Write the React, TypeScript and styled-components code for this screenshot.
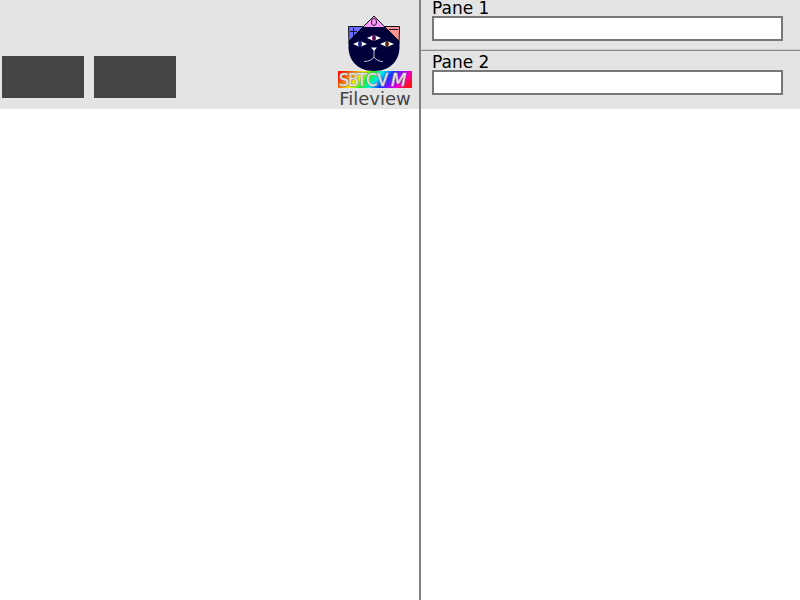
import React from "react";
import styled, { createGlobalStyle } from "styled-components";

const GlobalStyle = createGlobalStyle`
  * { box-sizing: border-box; }
  body {
    margin: 0;
    background: #ffffff;
    font-family: "DejaVu Sans", sans-serif;
  }
`;

const Window = styled.main`
  display: grid;
  grid-template-columns: minmax(0, 421fr) minmax(0, 379fr);
  min-height: 100vh;
`;

const Column = styled.section<{ $divided?: boolean }>`
  display: grid;
  grid-template-rows: 109px 1fr;
  border-right: ${(p) => (p.$divided ? "2px solid #808080" : "none")};
`;

const Header = styled.header`
  display: flex;
  justify-content: space-between;
  align-items: flex-end;
  background: #e4e4e4;
  padding: 0 7px 0 2px;
`;

const Toolbar = styled.div`
  display: flex;
  gap: 10px;
  padding-bottom: 11px;
`;

const ToolButton = styled.button`
  width: 82px;
  height: 42px;
  padding: 0;
  border: 0;
  background: #444444;
`;

const Brand = styled.div`
  display: flex;
  flex-direction: column;
  align-items: center;
  width: 74px;
`;

const Title = styled.span`
  font-size: 18px;
  line-height: 20px;
  color: #444444;
`;

const Logo = styled.svg`
  display: block;
  flex: none;
`;

const LogoText = styled.text`
  font-family: "DejaVu Sans Condensed", "DejaVu Sans", sans-serif;
  font-size: 18px;
  fill: #e6e2e2;
  stroke: #8a8a8a;
  stroke-width: 1px;
  paint-order: stroke;
`;

const SlantedLetter = styled.tspan`
  font-family: "DejaVu Sans", sans-serif;
  font-style: italic;
`;

const PaneList = styled.div`
  background: #e4e4e4;
`;

const Pane = styled.div<{ $ruled?: boolean }>`
  display: flex;
  flex-direction: column;
  padding: ${(p) => (p.$ruled ? "0 17px 9px 11px" : "3px 17px 14px 11px")};
  border-bottom: ${(p) => (p.$ruled ? "1px solid #8c8c8c" : "none")};
  box-shadow: ${(p) => (p.$ruled ? "inset 0 -1px #cbcbcb" : "none")};
`;

const PaneLabel = styled.label`
  font-size: 17px;
  line-height: 16px;
  color: #000000;
`;

const PaneInput = styled.input`
  width: 100%;
  height: 25px;
  padding: 0 4px;
  border: 2px solid #777777;
  border-radius: 0;
  outline: 0;
  background: #ffffff;
  font: inherit;
  font-size: 15px;
`;

const EYES = [
  { x: 36, y: 24, iris: "#851a79" },
  { x: 22, y: 30, iris: "#2430a8" },
  { x: 49, y: 30, iris: "#8a451d" },
];

function CatLogo() {
  return (
    <Logo width="74" height="75" viewBox="0 0 74 75" aria-hidden="true">
      <defs>
        <linearGradient id="rainbow" x1="0" y1="0.4" x2="1" y2="0.6">
          <stop offset="0" stopColor="#ff1600" />
          <stop offset="0.15" stopColor="#ff8a00" />
          <stop offset="0.27" stopColor="#e8f500" />
          <stop offset="0.39" stopColor="#19f219" />
          <stop offset="0.52" stopColor="#00eaf0" />
          <stop offset="0.65" stopColor="#1238ff" />
          <stop offset="0.79" stopColor="#b000ff" />
          <stop offset="0.89" stopColor="#ff00b0" />
          <stop offset="1" stopColor="#ff1020" />
        </linearGradient>
      </defs>
      <path d="M10.5 12.5H28L11 30Z" fill="#6a6aff" stroke="#111" />
      <path d="M61.5 12.5H44L61 30Z" fill="#ff9696" stroke="#111" />
      <path d="M12 17.5H19M15.5 14V22M51 15.5H60" fill="none" stroke="#15153b" />
      <path
        d="M36 2L11 27C8 44 18 57 36 57C54 57 64 44 61 27Z"
        fill="#01003a"
      />
      <path d="M36 2L25 13H47Z" fill="#ff9bff" />
      <path d="M11 27L36 2L61 27" fill="none" stroke="#111" />
      <ellipse cx="36" cy="8" rx="2.5" ry="3.5" fill="none" stroke="#2b102b" />
      {EYES.map((eye) => (
        <g key={eye.iris}>
          <path
            d={`M${eye.x - 7} ${eye.y}L${eye.x} ${eye.y - 3}L${eye.x + 7} ${eye.y}L${eye.x} ${eye.y + 3}Z`}
            fill="#ffffff"
          />
          <ellipse cx={eye.x} cy={eye.y} rx="2" ry="3" fill={eye.iris} />
          <path d={`M${eye.x} ${eye.y - 3}V${eye.y + 3}`} stroke="#080820" />
        </g>
      ))}
      <path d="M33 33.5H39L36 37Z" fill="#ffffff" />
      <path
        d="M36 36V43Q33 47.5 26 47.5M36 43Q39 47.5 45 47.5"
        fill="none"
        stroke="#b9b9ca"
      />
      <rect y="57" width="74" height="17" fill="url(#rainbow)" />
      <LogoText x="1 10 19 28 39" y="72">
        SBTCV
        <SlantedLetter x="53" y="72">M</SlantedLetter>
      </LogoText>
    </Logo>
  );
}

export default function App() {
  return (
    <>
      <GlobalStyle />
      <Window>
        <Column $divided>
          <Header>
            <Toolbar>
              <ToolButton type="button" />
              <ToolButton type="button" />
            </Toolbar>
            <Brand>
              <CatLogo />
              <Title>Fileview</Title>
            </Brand>
          </Header>
        </Column>
        <Column>
          <PaneList>
            <Pane $ruled>
              <PaneLabel htmlFor="pane-1">Pane 1</PaneLabel>
              <PaneInput id="pane-1" type="text" />
            </Pane>
            <Pane>
              <PaneLabel htmlFor="pane-2">Pane 2</PaneLabel>
              <PaneInput id="pane-2" type="text" />
            </Pane>
          </PaneList>
        </Column>
      </Window>
    </>
  );
}
